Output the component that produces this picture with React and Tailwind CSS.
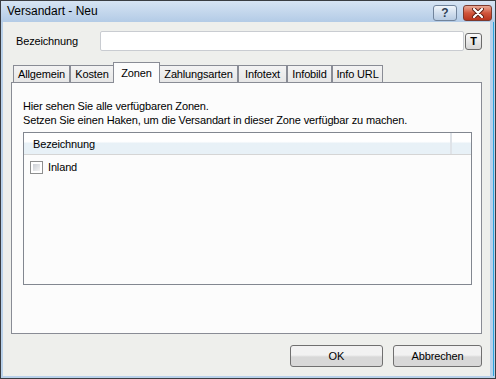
import React from "react";

const font = { fontFamily: '"Liberation Sans", Arial, sans-serif' };

const tabs = [
  { label: "Allgemein", w: "w-[57px]" },
  { label: "Kosten", w: "w-[44px]" },
  { label: "Zonen", w: "w-[47px]", active: true },
  { label: "Zahlungsarten", w: "w-[79px]" },
  { label: "Infotext", w: "w-[49px]" },
  { label: "Infobild", w: "w-[45px]" },
  { label: "Info URL", w: "w-[51px]" },
];

function TitleButtons() {
  return (
    <div className="flex items-start gap-[6px] pt-[4px]">
      <div className="w-[24px] h-[16px] rounded-[3px] border border-[#71849c] bg-gradient-to-b from-[#f1f6fb] via-[#d2dfee] to-[#b7cbe2] flex items-center justify-center">
        <span className="text-[12px] font-bold leading-none text-[#2f3f55]">?</span>
      </div>
      <div className="w-[29px] h-[16px] rounded-[3px] border border-[#7b3a2f] bg-gradient-to-b from-[#e8a996] via-[#d1553c] to-[#b8341d] flex items-center justify-center">
        <svg width="12" height="10" viewBox="0 0 12 10">
          <path d="M2 1 L10 9 M10 1 L2 9" stroke="#5b1d12" strokeWidth="4" strokeLinecap="round" />
          <path d="M2 1 L10 9 M10 1 L2 9" stroke="#ffffff" strokeWidth="2.2" strokeLinecap="round" />
        </svg>
      </div>
    </div>
  );
}

function Tab({ label, w, active }) {
  if (active) {
    return (
      <div className={`${w} h-[21px] -mx-[1px] relative z-10 bg-[#fcfcfc] border border-b-0 border-[#898c95] flex items-start pt-[2px] justify-center text-[11px] tracking-[-0.15px] text-black`}>
        {label}
      </div>
    );
  }
  return (
    <div className={`${w} h-[18px] bg-gradient-to-b from-[#f3f3f3] to-[#e6e6e6] border border-b-0 border-[#898c95] flex items-center justify-center text-[11px] tracking-[-0.15px] text-black`}>
      {label}
    </div>
  );
}

export default function App() {
  return (
    <div style={font} className="w-[496px] h-[379px] border border-[#3a3d42] bg-[#b9d1ea] flex flex-col overflow-hidden">
      {/* Title bar */}
      <div className="h-[21px] shrink-0 flex items-start justify-between pl-[6px] pr-[3px] bg-gradient-to-b from-[#d6e4f3] to-[#b3cbe6]">
        <span className="text-[12px] leading-[21px] text-black">Versandart - Neu</span>
        <TitleButtons />
      </div>

      {/* Body */}
      <div className="flex-1 flex ml-[2px] mb-[2px]">
        <div className="flex-1 flex flex-col bg-[#eeefec] pl-[8px] pr-[8px] pt-[9px]">
          {/* Bezeichnung row */}
          <div className="flex items-center h-[20px] pl-[5px]">
            <span className="w-[84px] text-[11px] tracking-[-0.15px] text-black">Bezeichnung</span>
            <div className="flex-1 h-[20px] bg-white border border-[#c9ccd1] rounded-[2px]" />
            <div className="ml-[1px] w-[17px] h-[17px] rounded-[3px] border border-[#6b6b6b] bg-gradient-to-b from-[#fafafa] to-[#d6d6d6] flex items-center justify-center">
              <span className="text-[11px] font-bold leading-none text-black">T</span>
            </div>
          </div>

          {/* Tabs */}
          <div className="mt-[11px] flex items-end h-[21px] pl-[2px]">
            {tabs.map((t) => (
              <Tab key={t.label} {...t} />
            ))}
          </div>

          {/* Tab panel */}
          <div className="h-[252px] -mt-[1px] bg-[#fcfcfc] border border-[#898c95] pl-[11px] pr-[9px] pt-[16px] flex flex-col">
            <p className="text-[11px] leading-[14px] tracking-[-0.15px] text-black">Hier sehen Sie alle verfügbaren Zonen.</p>
            <p className="text-[11px] leading-[14px] tracking-[-0.15px] text-black">
              Setzen Sie einen Haken, um die Versandart in dieser Zone verfügbar zu machen.
            </p>

            {/* List */}
            <div className="mt-[5px] h-[153px] bg-[#fcfcfc] border border-[#828790] flex flex-col">
              <div className="h-[22px] flex border-b border-[#d5d5d5] bg-gradient-to-b from-[#ffffff] from-40% to-[#e8f1f7] to-50%">
                <div className="flex-1 pl-[9px] text-[11px] leading-[22px] tracking-[-0.15px] text-black">Bezeichnung</div>
                <div className="w-[2px] h-full bg-[#dfe3e8]" />
                <div className="w-[19px]" />
              </div>
              <div className="flex items-center h-[22px] pl-[6px] mt-[1px]">
                <div className="w-[13px] h-[13px] border border-[#8e8f8f] bg-white p-[2px]">
                  <div className="w-full h-full bg-gradient-to-br from-[#cbcfd5] to-[#f4f4f4]" />
                </div>
                <span className="ml-[5px] text-[11px] tracking-[-0.15px] text-black">Inland</span>
              </div>
            </div>
          </div>

          {/* Buttons */}
          <div className="mt-[11px] flex justify-end gap-[10px]">
            <button className="w-[93px] h-[22px] rounded-[3px] border border-[#707070] bg-gradient-to-b from-[#f2f2f2] from-45% to-[#d8d8d8] to-55% text-[11px] text-black">
              OK
            </button>
            <button className="w-[89px] h-[22px] rounded-[3px] border border-[#707070] bg-gradient-to-b from-[#f2f2f2] from-45% to-[#d8d8d8] to-55% text-[11px] tracking-[-0.15px] text-black">
              Abbrechen
            </button>
          </div>
        </div>
        <div className="w-[3px] bg-[#b9d1ea]" />
        <div className="w-[1px] bg-[#29a3dc]" />
        <div className="w-[1px] bg-[#b9d1ea]" />
      </div>
    </div>
  );
}
